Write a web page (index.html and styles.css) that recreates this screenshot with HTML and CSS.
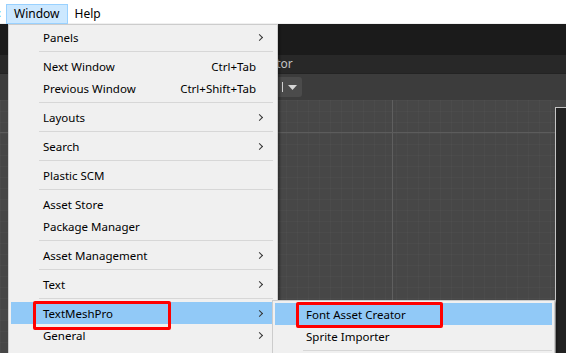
FILE: index.html
```html
<!DOCTYPE html>
<html lang="en">
<head>
  <meta charset="UTF-8" />
  <title>Window menu</title>
  <link rel="stylesheet" href="styles.css">
</head>
<body>

  <div class="menubar">
    <span class="edge-glyph">:</span>
    <span class="menu-title active">Window</span>
    <span class="menu-title">Help</span>
  </div>

  <div class="editor">
    <div class="titlebar"></div>
    <div class="tabs"><span class="tab"><span class="tab-label">Animator</span></span></div>
    <div class="toolbar">
      <div class="dropdown-btn">
        <span class="caret-bar"></span>
        <svg width="9" height="5" viewBox="0 0 9 5"><path d="M0 0H9L4.5 5Z" fill="#d6d6d6"/></svg>
      </div>
    </div>
    <div class="scene">
      <div class="grid-area"></div>
      <div class="side-panel"></div>
    </div>
  </div>

  <!-- main Window dropdown -->
  <div class="menu main-menu">
    <div class="item">Panels<span class="arrow"></span></div>
    <div class="sep"></div>
    <div class="item">Next Window<span class="shortcut">Ctrl+Tab</span></div>
    <div class="item">Previous Window<span class="shortcut">Ctrl+Shift+Tab</span></div>
    <div class="sep"></div>
    <div class="item">Layouts<span class="arrow"></span></div>
    <div class="sep"></div>
    <div class="item">Search<span class="arrow"></span></div>
    <div class="sep"></div>
    <div class="item">Plastic SCM</div>
    <div class="sep"></div>
    <div class="item">Asset Store</div>
    <div class="item">Package Manager</div>
    <div class="sep"></div>
    <div class="item">Asset Management<span class="arrow"></span></div>
    <div class="sep"></div>
    <div class="item">Text<span class="arrow"></span></div>
    <div class="sep"></div>
    <div class="item hover"><span class="mark mark-tmp">TextMeshPro</span><span class="arrow"></span></div>
    <div class="item">General<span class="arrow"></span></div>
  </div>

  <!-- TextMeshPro submenu -->
  <div class="menu sub-menu">
    <div class="item hover"><span class="mark mark-fac">Font Asset Creator</span></div>
    <div class="item">Sprite Importer</div>
    <div class="sep"></div>
  </div>

</body>
</html>
```

FILE: styles.css
```css
body {
  margin: 0;
  width: 566px;
  height: 353px;
  overflow: hidden;
  position: relative;
  font-family: "Noto Sans", "Open Sans", sans-serif;
  font-size: 11.5px;
  color: #000;
  background: #3c3c3c;
}
.menubar {
  height: 24px;
  background: #fff;
  display: flex;
  align-items: flex-start;
  border-bottom: 1px solid #f0f0f0;
  box-sizing: border-box;
}
.edge-glyph {
  width: 8px;
  margin-left: -2px;
  margin-top: 4px;
  color: #0078d7;
  line-height: 18px;
}
.menu-title {
  height: 20px;
  line-height: 18px;
  margin-top: 4px;
  padding: 0 6px;
  font-size: 12px;
  border: 1px solid transparent;
  box-sizing: border-box;
}
.menu-title.active {
  background: #cce8ff;
  border-color: #99d1ff;
  padding: 0 7px;
}
.editor {
  display: flex;
  flex-direction: column;
  height: 329px;
}
.titlebar {
  height: 31px;
  background: #1b1b1b;
}
.tabs {
  height: 18px;
  background: #282828;
  color: #c4c4c4;
  line-height: 18px;
  padding-left: 272px;
}
.tab {
  display: inline-block;
  overflow: hidden;
  font-size: 12px;
}
.tab-label {
  display: inline-block;
  margin-left: -32px;
}
.toolbar {
  height: 26px;
  background: #3c3c3c;
  border-top: 1px solid #232323;
  display: flex;
  align-items: center;
}
.dropdown-btn {
  margin-left: 276px;
  width: 26px;
  height: 20px;
  background: #4b4b4b;
  border-radius: 3px;
  display: flex;
  align-items: center;
  justify-content: flex-end;
  gap: 5px;
  padding-right: 5px;
  box-sizing: border-box;
}
.caret-bar {
  width: 1px;
  height: 10px;
  background: #cfcfcf;
}
.scene {
  flex: 1;
  display: flex;
  background: #474747;
}
.grid-area {
  flex: 1;
  background:
    linear-gradient(#5c5c5c, #5c5c5c) 0 32px / 100% 1px no-repeat,
    linear-gradient(#5f5f5f, #5f5f5f) 392px 0 / 1px 100% no-repeat,
    linear-gradient(90deg, rgba(255,255,255,0.018) 1px, transparent 1px) 0 0 / 11px 11px,
    linear-gradient(rgba(255,255,255,0.018) 1px, transparent 1px) 0 0 / 11px 11px,
    #474747;
}
.side-panel {
  width: 10px;
  margin-top: 7px;
  background: #222;
  border-top: 1px solid #c4c4c4;
  border-left: 1px solid #c4c4c4;
}

/* menus */
.menu {
  position: absolute;
  background: #f0f0f0;
  border: 1px solid #cccccc;
  box-shadow: 2px 2px 2px rgba(0, 0, 0, 0.35);
  padding: 1px 4px 2px 2px;
  box-sizing: border-box;
}
.main-menu {
  left: 8px;
  top: 24px;
  width: 270px;
  height: 340px;
}
.sub-menu {
  left: 272px;
  top: 300px;
  width: 283px;
  height: 60px;
  padding: 2px 2px 2px 2px;
}
.item {
  height: 22px;
  display: flex;
  align-items: center;
  padding-left: 32px;
  padding-right: 17px;
  position: relative;
  white-space: nowrap;
}
.item.hover {
  background: #91c9f7;
}
.shortcut {
  margin-left: auto;
}
.arrow {
  margin-left: auto;
  margin-right: -6px;
  width: 4px;
  height: 4px;
  border-top: 1px solid #333;
  border-right: 1px solid #333;
  transform: rotate(45deg);
}
.sep {
  height: 1px;
  margin: 3px 0 3px 28px;
  background: #d7d7d7;
}
.mark {
  position: relative;
}
.mark::after {
  content: "";
  position: absolute;
  border: 3px solid #ff0000;
  border-radius: 2px;
  box-sizing: border-box;
}
.mark-tmp::after {
  left: -10px;
  top: -5px;
  width: 138px;
  height: 29px;
}
.mark-fac::after {
  left: -10px;
  top: -5px;
  width: 147px;
  height: 26px;
}
.sub-menu .item {
  padding-left: 31px;
}
.sub-menu .sep {
  margin-left: 28px;
}
```
